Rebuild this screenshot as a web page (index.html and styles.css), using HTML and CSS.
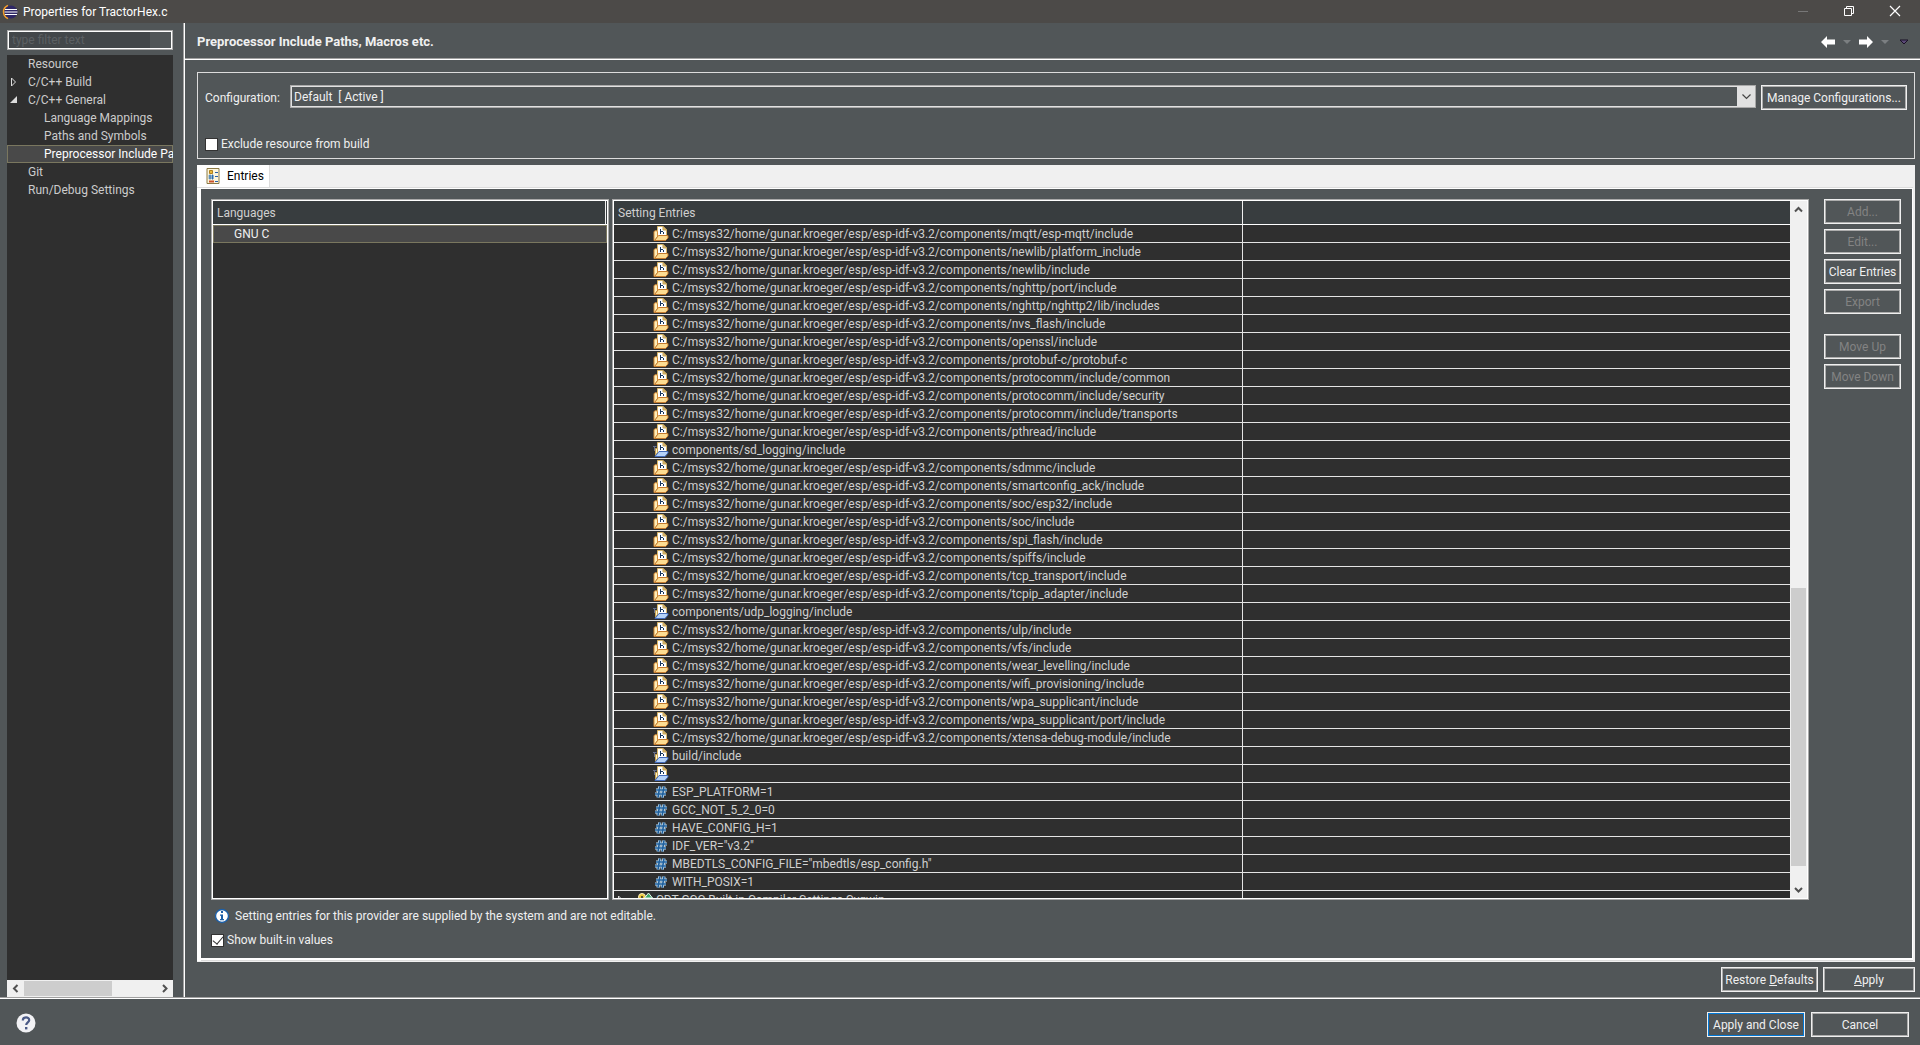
FILE: index.html
```html
<!DOCTYPE html>
<html lang="en">
<head>
<meta charset="utf-8">
<title>Properties for TractorHex.c</title>
<link rel="stylesheet" href="styles.css">
</head>
<body>
<svg class="defs" aria-hidden="true">
  <symbol id="inc" viewBox="0 0 16 16">
    <path d="M4.500 13.500V.5h5.500l3.500 3.500v6" fill="#fff" stroke="#d9b768"/>
    <path d="M10 .5V4h3.500z" fill="#e8c069" stroke="#c2a25c"/>
    <path d="M1 5.500l2-1 1.500 1v5L2 14.500H1z" fill="#ffeeb8" stroke="#d58a35"/>
    <path d="M7 3h1v5H7zM8 5h2v1H8zM10 6h1v2h-1z" fill="#16365f" shape-rendering="crispEdges"/>
    <path d="M1.500 14.500L5.500 9.500h9.500v2.500l-2.500 2.500z" fill="#fcdc92" stroke="#c47a2c"/>
  </symbol>
  <symbol id="wsinc" viewBox="0 0 16 16">
    <path d="M0 4.500h3.500M1.500 4v5" fill="none" stroke="#66708c"/>
    <path d="M4.500 13.500V.5h5.500l3.500 3.500v6" fill="#fff" stroke="#d9b768"/>
    <path d="M10 .5V4h3.500z" fill="#e8c069" stroke="#c2a25c"/>
    <path d="M2.500 6.500h2v4l-2 3z" fill="#fff3c4" stroke="#c9a556"/>
    <path d="M7 3h1v5H7zM8 5h2v1H8zM10 6h1v2h-1z" fill="#16365f" shape-rendering="crispEdges"/>
    <path d="M2 14.500L6 9.500h9v1.500l-3 3.500z" fill="#b4d2f9" stroke="#4169b8"/>
  </symbol>
  <symbol id="mac" viewBox="0 0 16 16">
    <path d="M6.800 2.500L5 13.500M11 2.500L9.200 13.500M3 6h11M2 10h11" fill="none" stroke="#c3e0f4" stroke-width="3.200"/>
    <path d="M6.800 2.500L5 13.500M11 2.500L9.200 13.500M3 6h11M2 10h11" fill="none" stroke="#1f5f9c" stroke-width="1.600"/>
  </symbol>
</svg>

<header class="titlebar">
  <svg width="16" height="16" viewBox="0 0 16 16"><path d="M6 1.500a7 7 0 0 0 0 13" fill="none" stroke="#f39c2b" stroke-width="1.600"/><circle cx="9" cy="8" r="6.500" fill="#2f2766"/><path d="M3 5.500h12M2.500 8h13M3 10.500h12" stroke="#fff" stroke-width="1.200"/></svg>
  <span class="caption">Properties for TractorHex.c</span>
  <button class="win" aria-label="Minimize"><svg width="12" height="12"><path d="M1 6.500h10" stroke="#777"/></svg></button>
  <button class="win" aria-label="Restore"><svg width="12" height="12"><path d="M1.500 3.500h7v7h-7zM3.500 3.500v-2h7v7h-2" fill="none" stroke="#fff"/></svg></button>
  <button class="win" aria-label="Close"><svg width="12" height="12"><path d="M1 1l10 10M11 1L1 11" stroke="#fff" stroke-width="1.200"/></svg></button>
</header>

<div class="body">
  <nav class="side">
    <input class="filter" type="text" placeholder="type filter text" aria-label="type filter text">
    <ul class="tree">
      <li><a href="#">Resource</a></li>
      <li><a href="#"><svg class="twist" width="8" height="10"><path d="M1.500 1l4 4-4 4z" fill="none" stroke="#ddd"/></svg>C/C++ Build</a></li>
      <li><a href="#"><svg class="twist" width="8" height="10"><path d="M7 1v7H0z" fill="#ddd"/></svg>C/C++ General</a>
        <ul>
          <li><a href="#">Language Mappings</a></li>
          <li><a href="#">Paths and Symbols</a></li>
          <li><a href="#" class="selected">Preprocessor Include Paths, Macros etc.</a></li>
        </ul>
      </li>
      <li><a href="#">Git</a></li>
      <li><a href="#">Run/Debug Settings</a></li>
    </ul>
    <div class="hbar">
      <svg width="17" height="17"><path d="M10.500 5L7 8.500l3.500 3.500" fill="none" stroke="#505050" stroke-width="2"/></svg>
      <span class="track"><span class="thumb"></span></span>
      <svg width="17" height="17"><path d="M7 5l3.500 3.500L7 12" fill="none" stroke="#505050" stroke-width="2"/></svg>
    </div>
  </nav>

  <main class="page">
    <div class="pagehead">
      <h1>Preprocessor Include Paths, Macros etc.</h1>
      <button class="tool" aria-label="Back"><svg width="16" height="14"><path d="M1 7l6-6v3.500h8v5H7V13z" fill="#fff"/></svg></button>
      <button class="tool" aria-label="Back history"><svg width="10" height="6"><path d="M1 1h8L5 5z" fill="#7b7f81"/></svg></button>
      <button class="tool" aria-label="Forward"><svg width="16" height="14"><path d="M15 7L9 1v3.500H1v5h8V13z" fill="#fff"/></svg></button>
      <button class="tool" aria-label="Forward history"><svg width="10" height="6"><path d="M1 1h8L5 5z" fill="#7b7f81"/></svg></button>
      <button class="tool" aria-label="Menu"><svg width="10" height="6"><path d="M1 1h8L5 5z" fill="#5b4a78" stroke="#1b1026"/></svg></button>
    </div>

    <div class="content">
      <section class="group">
        <div class="config">
          <label for="cfg">Configuration:</label>
          <span class="combo">
            <select id="cfg"><option>Default&nbsp; [ Active ]</option></select>
            <svg width="17" height="19"><path d="M5.500 7.500l4 4 4-4" fill="none" stroke="#444" stroke-width="1.200"/></svg>
          </span>
          <button class="btn">Manage Configurations...</button>
        </div>
        <label class="check"><input type="checkbox">Exclude resource from build</label>
      </section>

      <section class="tabs">
        <div class="strip"><button class="tab">
          <svg width="16" height="18" viewBox="0 0 16 18"><path d="M2 1.500h12v15h-12z" fill="#fdf6dc" stroke="#8c7a45"/><path d="M4.500 3.500h3v3h-3z" fill="#e8b93a" stroke="#b07f1c"/><path d="M5 7.500v5M7.500 7.500v5M3.500 9h5.500M3.500 11h5.500" stroke="#2a6db0"/><path d="M4 14.500h5" stroke="#c8502a" stroke-width="2"/><path d="M10 5.500h3M10 9.500h3M10 14.500h3" stroke="#2a5ea8"/></svg>
          Entries</button></div>
        <div class="panel">
          <div class="work">
            <div class="box">
              <div class="view">
                <table class="langs">
                  <thead><tr><th>Languages</th><th class="sliver"></th></tr></thead>
                  <tbody><tr><td colspan="2">GNU C</td></tr></tbody>
                </table>
              </div>
            </div>
            <div class="box">
              <div class="view">
                <table class="entries">
                  <thead><tr><th class="name">Setting Entries</th><th></th></tr></thead>
                  <tbody id="rows"></tbody>
                </table>
              </div>
              <div class="vbar">
                <svg width="17" height="17"><path d="M5 10.500L8.500 7l3.500 3.500" fill="none" stroke="#505050" stroke-width="2"/></svg>
                <span class="track"><span class="thumb"></span></span>
                <svg width="17" height="17"><path d="M5 7l3.500 3.500L12 7" fill="none" stroke="#505050" stroke-width="2"/></svg>
              </div>
            </div>
            <div class="actions">
              <button class="btn" disabled>Add...</button>
              <button class="btn" disabled>Edit...</button>
              <button class="btn">Clear Entries</button>
              <button class="btn" disabled>Export</button>
              <button class="btn apart" disabled>Move Up</button>
              <button class="btn" disabled>Move Down</button>
            </div>
          </div>
          <p class="info"><svg width="16" height="16"><circle cx="8" cy="8" r="6.500" fill="#fff" stroke="#1b5fa8" stroke-width="1.400"/><path d="M7 3h2v2H7zM6 6.500h3V11h1v1.200H6V11h1V7.700H6z" fill="#1b5fa8"/></svg>Setting entries for this provider are supplied by the system and are not editable.</p>
          <label class="check"><input type="checkbox" checked>Show built-in values</label>
        </div>
      </section>

      <div class="pagebtns">
        <button class="btn">Restore <u>D</u>efaults</button>
        <button class="btn wide"><u>A</u>pply</button>
      </div>
    </div>
  </main>
</div>

<footer class="foot">
  <button class="help" aria-label="Help"><svg width="20" height="20"><circle cx="10" cy="10" r="9.500" fill="#f2f2f5"/><path d="M6.800 7.500c0-4.300 6.600-4 6.400-.4-.1 2.200-3 2.300-3 5" fill="none" stroke="#4b5a86" stroke-width="2.200"/><path d="M9 14h2.400v2.400H9z" fill="#4b5a86"/></svg></button>
  <button class="btn main">Apply and Close</button>
  <button class="btn main cancel">Cancel</button>
</footer>
<script src="entries.js"></script>
</body>
</html>
```
FILE: entries.js
```
const base = 'C:/msys32/home/gunar.kroeger/esp/esp-idf-v3.2/components/';
const entries = [
  ...['mqtt/esp-mqtt/include', 'newlib/platform_include', 'newlib/include', 'nghttp/port/include',
    'nghttp/nghttp2/lib/includes', 'nvs_flash/include', 'openssl/include', 'protobuf-c/protobuf-c',
    'protocomm/include/common', 'protocomm/include/security', 'protocomm/include/transports',
    'pthread/include'].map(p => ['inc', base + p]),
  ['wsinc', 'components/sd_logging/include'],
  ...['sdmmc/include', 'smartconfig_ack/include', 'soc/esp32/include', 'soc/include', 'spi_flash/include',
    'spiffs/include', 'tcp_transport/include', 'tcpip_adapter/include'].map(p => ['inc', base + p]),
  ['wsinc', 'components/udp_logging/include'],
  ...['ulp/include', 'vfs/include', 'wear_levelling/include', 'wifi_provisioning/include',
    'wpa_supplicant/include', 'wpa_supplicant/port/include', 'xtensa-debug-module/include'].map(p => ['inc', base + p]),
  ['wsinc', 'build/include'],
  ['wsinc', ''],
  ...['ESP_PLATFORM=1', 'GCC_NOT_5_2_0=0', 'HAVE_CONFIG_H=1', 'IDF_VER="v3.2"',
    'MBEDTLS_CONFIG_FILE="mbedtls/esp_config.h"', 'WITH_POSIX=1'].map(m => ['mac', m]),
];
const provider = `<tr class="provider"><td><div class="entry">
  <svg width="8" height="10"><path d="M1.500 1l4 4-4 4z" fill="none" stroke="#ddd"/></svg>
  <svg width="16" height="16"><circle cx="5" cy="5" r="3.500" fill="#e9c63b" stroke="#fff3c4"/><circle cx="5" cy="5" r="1" fill="#2f2f2f"/><path d="M7.500 6l4-5 4 5z" fill="#3fa66a" stroke="#e8f5ec"/></svg>
  CDT GCC Built-in Compiler Settings Cygwin</div></td><td></td></tr>`;
document.getElementById('rows').innerHTML = entries.map(([icon, text]) =>
  `<tr><td><div class="entry"><svg width="16" height="16"><use href="#${icon}"/></svg>${text}</div></td><td></td></tr>`
).join('') + provider;
```
FILE: styles.css
```css
* { box-sizing: border-box; }
body {
  margin: 0;
  height: 100vh;
  display: flex;
  flex-direction: column;
  overflow: hidden;
  background: #515658;
  color: #f0f0f0;
  font: 12px/16px Roboto, "Noto Sans", sans-serif;
}
button, input, select { font: inherit; color: inherit; margin: 0; }
button { padding: 0; border: 0; background: none; white-space: nowrap; }
svg { display: block; flex: none; }
ul, p, h1 { margin: 0; padding: 0; list-style: none; }
a { color: inherit; text-decoration: none; }
.defs { position: absolute; width: 0; height: 0; }

/* title bar */
.titlebar { flex: none; display: flex; align-items: center; height: 23px; padding: 0 2px; background: #4c4a48; color: #fff; }
.caption { flex: 1; padding-left: 5px; }
.win { width: 46px; height: 20px; margin-bottom: 2px; display: grid; place-items: center; }

.body { flex: 1; min-height: 0; display: flex; border-bottom: 1px solid #fff; box-shadow: inset 0 -1px #a0a0a0; padding-bottom: 1px; }

/* navigation */
.side { flex: none; width: 183px; padding: 7px 10px 0 7px; display: flex; flex-direction: column; }
.filter {
  width: 100%; height: 20px; padding: 0 4px; border: 1px solid #a9a9a9; outline: 0;
  box-shadow: inset 0 0 0 1px #fff;
  background: linear-gradient(to right, #43474a calc(100% - 22px), #515658 0);
}
.filter::placeholder { color: #5c6063; opacity: 1; }
.tree { flex: 1; min-height: 0; overflow: hidden; margin-top: 5px; background: #2f2f2f; color: #ccc; }
.tree a { position: relative; display: block; height: 18px; line-height: 18px; padding-left: 21px; white-space: nowrap; overflow: hidden; }
.tree ul a { padding-left: 37px; }
.tree a.selected { background: #494949; color: #fff; box-shadow: inset 0 0 0 1px #7a775f; }
.twist { position: absolute; left: 3px; top: 4px; }
.hbar { flex: none; display: flex; height: 17px; background: #f0f0f0; }
.hbar .track { flex: 1; padding: 1px 0; display: flex; }
.hbar .thumb { width: 67%; background: #cdcdcd; }

/* page */
.page { flex: 1; min-width: 0; display: flex; flex-direction: column; border-left: 1px solid #a0a0a0; box-shadow: inset 1px 0 #fff; }
.pagehead { flex: none; display: flex; align-items: center; height: 37px; padding: 2px 8px 0 12px; margin-left: 1px; border-bottom: 1px solid #fff; box-shadow: inset 0 -1px #a0a0a0; }
.pagehead h1 { flex: 1; font-size: 13px; line-height: 16px; }
.tool { display: grid; place-items: center; width: 16px; margin-left: 3px; }
.content { flex: 1; min-height: 0; display: flex; flex-direction: column; padding: 12px 5px 5px 13px; }

.btn {
  height: 25px; padding: 0 2px; border: 1px solid #f0f0f0;
  box-shadow: inset 0 0 0 1px #adadad;
}
.btn:disabled { color: #838383; }

.group { flex: none; height: 87px; border: 1px solid #dcdcdc; padding: 12px 7px; display: flex; flex-direction: column; gap: 25px; }
.config { display: flex; }
.config label { width: 85px; line-height: 26px; }
.config .btn { width: 146px; margin-left: 5px; }
.combo { flex: 1; height: 23px; display: flex; border: 1px solid #a9a9a9; background: #e1e1e1; padding: 1px; }
.combo select { flex: 1; appearance: none; border: 0; border-radius: 0; background: #515658; padding: 0 2px; outline: 0; }
.check { display: flex; align-items: center; gap: 3px; height: 16px; }
.check input {
  appearance: none; width: 13px; height: 13px; background: #fff; border: 1px solid #333;
  display: grid; place-items: center;
}
.check input:checked::before { content: ""; width: 5px; height: 9px; margin-top: -2px; border: solid #333; border-width: 0 1px 1px 0; rotate: 40deg; }

/* tab folder */
.tabs { flex: 1; min-height: 0; margin-top: 6px; display: flex; flex-direction: column; background: #fff; border: solid #f0f0f0; border-width: 0 2px 1px 0; }
.strip { flex: none; height: 23px; background: #f0f0f0; border-bottom: 1px solid #dcdcdc; display: flex; }
.tab { display: flex; align-items: center; gap: 6px; width: 73px; height: 22px; padding-left: 8px; background: #fff; border-right: 1px solid #dcdcdc; color: #000; }
.panel {
  flex: 1; min-height: 0; display: flex; flex-direction: column;
  margin: 1px 0 1px 4px; padding: 10px 11px 6px 10px;
  background: #515658; border: solid #fff; border-width: 0 1px 2px 0; box-shadow: 0 1px #dcdcdc;
}
.work { flex: 1; min-height: 0; display: grid; grid-template-columns: 398fr 1197fr 89px; column-gap: 3px; }
.box { min-width: 0; min-height: 0; display: flex; border: 1px solid #a9a9a9; background: #2f2f2f; box-shadow: inset 0 0 0 1px #fff; padding: 1px; }
.view { flex: 1; min-width: 0; overflow: hidden; }
.view table { width: 100%; table-layout: fixed; border-spacing: 0; color: #d0d0d0; }
.view th { height: 24px; padding: 0 0 0 4px; text-align: left; font-weight: 400; background: #383d3f; border-bottom: 1px solid #fff; }
.view th:first-child { border-right: 1px solid #f0f0f0; }
.view th.sliver { width: 1px; padding: 0; }
.langs td { height: 18px; padding: 0 0 0 20px; border: 1px solid #7a775f; background: #494949; color: #f0f0f0; line-height: 16px; }
.entries .name { width: 629px; }
.entries td { height: 18px; padding: 0; border-bottom: 1px solid #e4e4e4; }
.entries td:first-child { border-right: 1px solid #e4e4e4; }
.entry { display: flex; align-items: center; gap: 3px; height: 17px; padding-left: 39px; white-space: nowrap; }
.provider .entry { padding-left: 3px; }
.provider .entry svg:first-child { margin-right: 9px; }
.vbar { flex: none; width: 17px; background: #f0f0f0; display: flex; flex-direction: column; }
.vbar .track { flex: 1; padding: 0 1px; display: flex; align-items: flex-end; }
.vbar .thumb { width: 100%; height: 42%; margin-bottom: 15px; background: #cdcdcd; }
.actions { display: flex; flex-direction: column; gap: 5px; margin-left: 12px; }
.actions .apart { margin-top: 15px; }
.info { flex: none; display: flex; align-items: center; gap: 5px; height: 24px; margin-top: 4px; padding-left: 3px; }
.panel .check { flex: none; height: 24px; }

.pagebtns { flex: none; display: flex; justify-content: flex-end; gap: 5px; margin-top: 5px; }
.pagebtns .btn { width: 97px; }
.pagebtns .wide { width: 92px; }

/* dialog buttons */
.foot { flex: none; display: flex; align-items: center; gap: 6px; height: 46px; padding: 5px 11px 0 16px; }
.help { margin: -4px auto 0 0; }
.foot .main { width: 98px; box-shadow: inset 0 0 0 1px #0078d7; }
.foot .cancel { box-shadow: inset 0 0 0 1px #adadad; }
```
